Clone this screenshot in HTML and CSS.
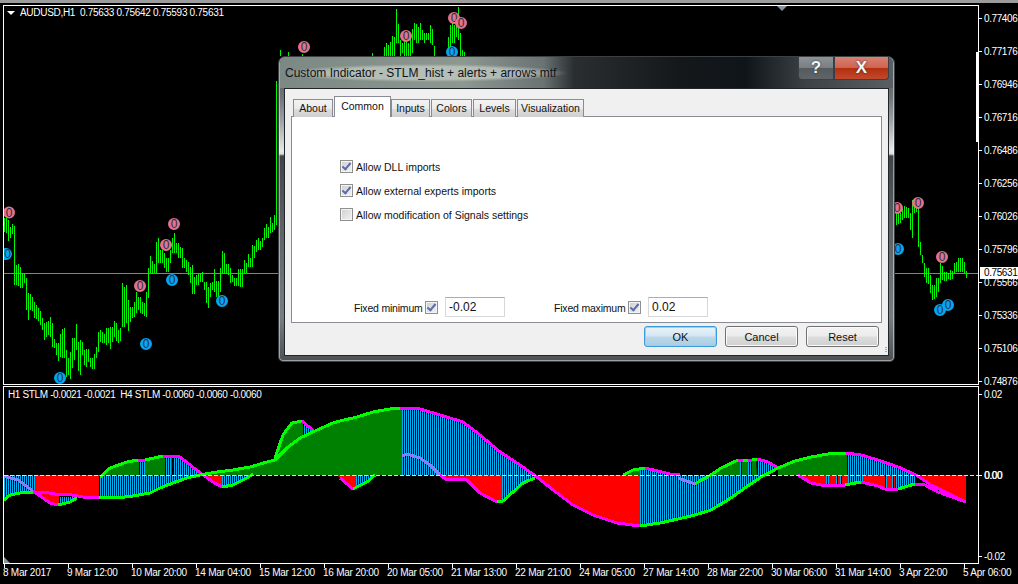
FILE: index.html
```html
<!DOCTYPE html>
<html lang="en">
<head>
    <meta charset="UTF-8">
    <title>AUDUSD,H1 - Custom Indicator</title>
    <link rel="stylesheet" href="styles.css">
</head>
<body>

    <div class="top-edge"></div>

    <!-- Price chart -->
    <section class="chart-row price-row">
        <div class="plot price-plot">
            <div class="chart-title"><span class="title-arrow"></span>AUDUSD,H1&nbsp; 0.75633 0.75642 0.75593 0.75631</div>
            <span class="shift-mark"></span>
            <span class="period-mark"></span>
            <svg width="974" height="378" viewBox="4 6 974 378">
                <line class="bid-line" x1="4" y1="273.5" x2="978" y2="273.5"/>
                <path class="bars" d="M4.5 218V232M6.5 218V233M8.5 220V241M10.5 227V238M12.5 224V234M14.5 226V285M16.5 265V285M18.5 264V286M20.5 267V288M22.5 273V288M24.5 273V283M26.5 278V310M28.5 293V320M30.5 294V310M32.5 297V311M34.5 302V318M36.5 305V319M38.5 308V321M40.5 311V325M42.5 318V330M44.5 323V340M46.5 322V337M48.5 321V335M50.5 317V337M52.5 323V347M54.5 339V348M56.5 343V355M58.5 343V361M60.5 334V357M62.5 329V358M64.5 328V358M66.5 350V377M68.5 358V375M70.5 352V379M72.5 338V368M74.5 338V360M76.5 324V350M78.5 342V371M80.5 340V375M82.5 342V355M84.5 350V365M86.5 349V367M88.5 349V362M90.5 358V367M92.5 358V369M94.5 354V369M96.5 347V358M98.5 332V352M100.5 330V342M102.5 332V343M104.5 334V343M106.5 328V345M108.5 328V343M110.5 327V349M112.5 327V342M114.5 321V337M116.5 323V341M118.5 330V343M120.5 328V341M122.5 283V327M124.5 287V327M126.5 285V323M128.5 300V331M130.5 307V322M132.5 307V318M134.5 302V317M136.5 292V313M138.5 297V310M140.5 297V313M142.5 302V314M144.5 303V316M146.5 292V317M148.5 268V298M150.5 256V273M152.5 261V274M154.5 264V273M156.5 242V273M158.5 238V263M160.5 250V263M162.5 250V263M164.5 253V268M166.5 258V272M168.5 258V272M170.5 250V263M172.5 238V253M174.5 233V253M176.5 243V253M178.5 243V258M180.5 247V258M182.5 248V268M184.5 258V268M186.5 260V272M188.5 262V275M190.5 267V283M192.5 265V294M194.5 277V294M196.5 275V285M198.5 274V285M200.5 273V282M202.5 272V282M204.5 282V290M206.5 282V303M208.5 287V308M210.5 283V297M212.5 282V290M214.5 269V292M216.5 281V297M218.5 281V297M220.5 268V292M222.5 251V274M224.5 253V274M226.5 264V274M228.5 264V275M230.5 268V283M232.5 275V282M234.5 278V286M236.5 278V286M238.5 269V286M240.5 269V287M242.5 269V287M244.5 260V273M246.5 263V273M248.5 254V267M250.5 258V267M252.5 245V267M254.5 246V258M256.5 240V252M258.5 238V250M260.5 241V250M262.5 238V247M264.5 228V240M266.5 224V238M268.5 227V238M270.5 217V233M272.5 223V232M274.5 215V230M276.5 81V225M280.5 50V56M288.5 52V56M302.5 54V56"/>
                <path class="bars" d="M372.5 53V56M384.5 47V56M386.5 43V56M388.5 45V56M390.5 42V56M392.5 36V56M394.5 37V56M396.5 9V43M398.5 24V43M400.5 40V56M402.5 43V53M404.5 38V56M406.5 42V56M408.5 43V56M410.5 38V56M412.5 29V53M414.5 23V40M416.5 24V43M418.5 27V43M420.5 23V40M422.5 30V40M424.5 33V43M426.5 33V40M428.5 33V40M430.5 25V43M432.5 29V45M434.5 46V56M448.5 37V50M450.5 25V56M452.5 17V43M454.5 25V43M456.5 20V37M458.5 7V40M460.5 33V56M462.5 50V56M464.5 52V56"/>
                <path class="bars" d="M896.5 208V225M898.5 208V224M900.5 213V223M902.5 208V220M904.5 206V218M906.5 207V218M908.5 208V218M910.5 213V230M912.5 200V238M914.5 199V213M916.5 202V212M918.5 202V247M920.5 242V255M922.5 255V263M924.5 263V277M926.5 268V283M928.5 268V284M930.5 275V293M932.5 285V300M934.5 285V299M936.5 278V297M938.5 278V292M940.5 263V283M942.5 266V280M944.5 272V281M946.5 272V281M948.5 273V279M950.5 270V280M952.5 271V279M954.5 263V273M956.5 262V272M958.5 258V272M960.5 258V272M962.5 258V272M964.5 262V273M966.5 271V278"/>

                <g class="marks sell">
                    <circle cx="9" cy="212.5" r="5"/><text x="9" y="216.5">0</text>
                    <circle cx="174" cy="224" r="5"/><text x="174" y="228">0</text>
                    <circle cx="166" cy="245" r="5"/><text x="166" y="249">0</text>
                    <circle cx="140" cy="286" r="5"/><text x="140" y="290">0</text>
                    <circle cx="304" cy="47" r="5"/><text x="304" y="51">0</text>
                    <circle cx="406" cy="36" r="5"/><text x="406" y="40">0</text>
                    <circle cx="454" cy="18" r="5"/><text x="454" y="22">0</text>
                    <circle cx="461" cy="23" r="5"/><text x="461" y="27">0</text>
                    <circle cx="897" cy="208" r="5"/><text x="897" y="212">0</text>
                    <circle cx="918" cy="203" r="5"/><text x="918" y="207">0</text>
                    <circle cx="942" cy="257" r="5"/><text x="942" y="261">0</text>
                </g>
                <g class="marks buy">
                    <circle cx="6" cy="254" r="5"/><text x="7.5" y="258">0</text>
                    <circle cx="172" cy="280" r="5"/><text x="172" y="284">0</text>
                    <circle cx="222" cy="301" r="5"/><text x="222" y="305">0</text>
                    <circle cx="146" cy="344" r="5"/><text x="146" y="348">0</text>
                    <circle cx="60" cy="378" r="5"/><text x="60" y="382">0</text>
                    <circle cx="452" cy="52" r="5"/><text x="452" y="56">0</text>
                    <circle cx="898" cy="249" r="5"/><text x="898" y="253">0</text>
                    <circle cx="940" cy="310" r="5"/><text x="940" y="314">0</text>
                    <circle cx="948" cy="305" r="5"/><text x="948" y="309">0</text>
                </g>
            </svg>
        </div>
        <div class="price-axis">
            <div class="axis-label">0.77406</div>
            <div class="axis-label">0.77176</div>
            <div class="axis-label">0.76946</div>
            <div class="axis-label">0.76716</div>
            <div class="axis-label">0.76486</div>
            <div class="axis-label">0.76256</div>
            <div class="axis-label">0.76026</div>
            <div class="axis-label">0.75796</div>
            <div class="axis-label">0.75566</div>
            <div class="axis-label">0.75336</div>
            <div class="axis-label">0.75106</div>
            <div class="axis-label">0.74876</div>
        </div>
        <div class="bid-tag">0.75631</div>
    </section>

    <!-- STLM indicator window -->
    <section class="chart-row stlm-row">
        <div class="plot stlm-plot">
            <div class="chart-title stlm-title">H1 STLM -0.0021 -0.0021&nbsp; H4 STLM -0.0060 -0.0060 -0.0060</div>
            <span class="corner-mark"></span>
            <svg width="974" height="176" viewBox="4 387 974 176">
                <defs>
                    <pattern id="stripes" width="2" height="4" patternUnits="userSpaceOnUse">
                        <rect width="2" height="4" fill="#000"/>
                        <rect width="1" height="4" fill="#00aef0"/>
                    </pattern>
                </defs>

                <g class="red">
                    <polygon points="35,475 99,475 99,497 83,497 67,494 55,494 43,492 35,492"/>
                    <polygon points="35,492 43,498 50,503 59,505 59,494 43,492"/>
                    <polygon points="203,475 222,475 222,487 213,482"/>
                    <polygon points="337,475 356,475 356,489 353,489 340,478"/>
                    <polygon points="440,475 502,475 502,501 497,502 480,493 467,480 457,479 447,480"/>
                    <polygon points="537,475 640,475 640,526 617,523 593,515 573,505 553,490"/>
                    <polygon points="798,475 848,475 848,485 821,485 811,483"/>
                    <polygon points="863,475 895,475 895,488 885,489 870,483 863,481"/>
                    <polygon points="916,475 966,475 966,502 948,493 931,485"/>
                </g>
                <g class="green">
                    <polygon points="100,475 100,477 110,468 127,462 138,460 163,456 172,456 172,475"/>
                    <polygon points="200,475 217,472 233,470 250,467 267,462 275,458 283,435 292,423 302,421 315,432 317,430 333,423 340,421 357,417 373,412 390,409 402,408 402,475"/>
                    <polygon points="623,475 633,470 645,468 640,468 640,475"/>
                    <polygon points="711,475 721,468 738,460 756,459 757,475"/>
                    <polygon points="778,475 778,468 795,461 811,457 828,454 847,453 847,475"/>
                </g>
                <g class="blue">
                    <polygon points="4,475 35,475 35,492 20,493 10,495 4,500"/>
                    <polygon points="60,497 77,497 72,502 60,504"/>
                    <polygon points="100,475 200,475 187,478 173,483 160,488 150,493 133,496 117,498 100,497"/>
                    <polygon points="139,460 145,460 145,475 139,475"/>
                    <polygon points="165,456 171,456 171,475 165,475"/>
                    <polygon points="173,456 180,457 190,465 200,475 173,475"/>
                    <polygon points="222,475 253,475 247,478 233,485 222,487"/>
                    <polygon points="303,421 315,432 303,438"/>
                    <polygon points="356,475 375,475 367,482 356,489"/>
                    <polygon points="402,475 402,408 420,409 430,412 450,418 463,422 480,435 500,452 517,463 537,477 535,475"/>
                    <polygon points="502,475 535,475 523,483 513,492 502,501"/>
                    <polygon points="640,468 645,468 670,474 680,475 761,475 761,477 745,488 728,500 711,510 695,515 678,519 660,523 640,526"/>
                    <polygon points="740,460 742,460 742,475 740,475"/>
                    <polygon points="748,460 752,460 752,475 748,475"/>
                    <polygon points="758,459 768,462 778,468 761,475 758,475"/>
                    <polygon points="848,453 861,455 878,460 898,467 916,475 848,475"/>
                    <polygon points="826,475 829,475 829,485 826,485"/>
                    <polygon points="836,475 838,475 838,485 836,485"/>
                    <polygon points="840,475 842,475 842,485 840,485"/>
                    <polygon points="848,475 863,475 863,481 848,485"/>
                    <polygon points="885,475 887,475 887,489 885,489"/>
                    <polygon points="892,475 894,475 894,489 892,489"/>
                    <polygon points="896,475 916,475 915,484 900,488 896,488"/>
                </g>

                <!-- magenta seen through the stripes -->
                <polyline class="line lilac" points="4,476 18,480 33,491"/>
                <polyline class="line lilac" points="402,456 407,454 420,458 430,465 440,475"/>
                <polyline class="line lilac" points="678,478 695,484"/>

                <!-- fast line -->
                <polyline class="line pink" points="33,491 43,498 50,503 58,505"/>
                <polyline class="line lime" points="58,505 70,502 77,498"/>
                <polyline class="line lime" points="100,477 110,468 127,462 138,460"/>
                <polyline class="line pink" points="138,460 145,460"/>
                <polyline class="line lime" points="145,460 163,456"/>
                <polyline class="line pink" points="163,456 180,457 190,465 202,474 213,482 222,487"/>
                <polyline class="line lime" points="222,487 233,485 247,478 253,474"/>
                <polyline class="line lime" points="275,458 283,435 292,423 302,421"/>
                <polyline class="line pink" points="302,421 315,432"/>
                <polyline class="line pink" points="340,478 353,489"/>
                <polyline class="line lime" points="353,489 367,482 375,475"/>
                <polyline class="line pink" points="440,475 447,480 457,479 467,480 480,493 497,502"/>
                <polyline class="line lime" points="497,502 503,501 513,492 523,483 535,478"/>
                <polyline class="line lime" points="623,475 633,470 645,468"/>
                <polyline class="line pink" points="645,468 670,474 680,475"/>
                <polyline class="line lime" points="695,484 698,482 711,475 721,468 738,460"/>
                <polyline class="line pink" points="738,460 743,460"/>
                <polyline class="line lime" points="743,460 748,460"/>
                <polyline class="line pink" points="748,460 752,460"/>
                <polyline class="line lime" points="752,460 757,459"/>
                <polyline class="line pink" points="757,459 768,462 778,468"/>
                <polyline class="line pink" points="798,475 811,483 821,485 845,485"/>
                <polyline class="line lime" points="845,485 861,482"/>
                <polyline class="line pink" points="861,482 878,486 885,489 898,489"/>
                <polyline class="line lime" points="898,489 915,484"/>
                <polyline class="line pink" points="915,484 925,485 938,492 966,502"/>

                <!-- slow line -->
                <polyline class="line lime" points="4,500 10,495 20,493 33,492"/>
                <polyline class="line pink" points="33,492 43,492 55,494 67,494 83,497 99,497"/>
                <polyline class="line lime" points="99,497 117,498 133,496 150,493 160,488 173,483 187,478 200,475 217,472 233,470 250,467 267,462 275,460 287,448 300,438 317,430 333,423 340,421 357,417 373,412 390,409 400,408"/>
                <polyline class="line pink" points="400,408 420,409 430,412 450,418 463,422 480,435 500,452 517,463 537,477 553,490 573,505 593,515 617,523 640,526"/>
                <polyline class="line lime" points="640,526 660,523 678,519 695,515 711,510 728,500 745,488 761,477 778,468 795,461 811,457 828,454 846,453"/>
                <polyline class="line pink" points="846,453 861,455 878,460 898,467 916,475 931,485 948,493 966,502"/>

                <line class="zero-line" x1="4" y1="475.5" x2="978" y2="475.5"/>
            </svg>
        </div>
        <div class="scale-axis">
            <div class="axis-label">0.02</div>
            <div class="axis-label zero-label">0.00</div>
            <div class="axis-label">-0.02</div>
        </div>
    </section>

    <div class="time-axis">
        <span class="time-label">8 Mar 2017</span>
        <span class="time-label">9 Mar 12:00</span>
        <span class="time-label">10 Mar 20:00</span>
        <span class="time-label">14 Mar 04:00</span>
        <span class="time-label">15 Mar 12:00</span>
        <span class="time-label">16 Mar 20:00</span>
        <span class="time-label">20 Mar 05:00</span>
        <span class="time-label">21 Mar 13:00</span>
        <span class="time-label">22 Mar 21:00</span>
        <span class="time-label">24 Mar 05:00</span>
        <span class="time-label">27 Mar 14:00</span>
        <span class="time-label">28 Mar 22:00</span>
        <span class="time-label">30 Mar 06:00</span>
        <span class="time-label">31 Mar 14:00</span>
        <span class="time-label">3 Apr 22:00</span>
        <span class="time-label">5 Apr 06:00</span>
    </div>

    <!-- Custom Indicator dialog -->
    <div class="dialog">
        <div class="title-bar">
            <div class="title-text">Custom Indicator - STLM_hist + alerts + arrows mtf</div>
            <div class="window-buttons">
                <span class="win-btn help-btn">?</span>
                <span class="win-btn close-btn">X</span>
            </div>
        </div>
        <div class="client">
            <div class="tabs">
                <div class="tab tab-about">About</div>
                <div class="tab tab-common active">Common</div>
                <div class="tab tab-inputs">Inputs</div>
                <div class="tab tab-colors">Colors</div>
                <div class="tab tab-levels">Levels</div>
                <div class="tab tab-visual">Visualization</div>
            </div>
            <div class="tab-panel">
                <div class="options">
                    <label class="option"><span class="check checked"></span>Allow DLL imports</label>
                    <label class="option"><span class="check checked"></span>Allow external experts imports</label>
                    <label class="option"><span class="check"></span>Allow modification of Signals settings</label>
                </div>
                <div class="range-row">
                    <div class="range">
                        <span class="range-name">Fixed minimum</span>
                        <span class="check checked"></span>
                        <span class="text-box">-0.02</span>
                    </div>
                    <div class="range">
                        <span class="range-name range-max">Fixed maximum</span>
                        <span class="check checked"></span>
                        <span class="text-box">0.02</span>
                    </div>
                </div>
            </div>
            <div class="buttons">
                <button class="btn default-btn">OK</button>
                <button class="btn">Cancel</button>
                <button class="btn">Reset</button>
            </div>
            <span class="grip"></span>
        </div>
    </div>

</body>
</html>
```

FILE: styles.css
```css
body {
    margin: 0;
    width: 1018px;
    height: 584px;
    overflow: hidden;
    position: relative;
    background-color: #000;
    color: #fff;
    font-family: "Liberation Sans", Arial, sans-serif;
    font-size: 10px;
}

.top-edge {
    height: 2px;
    border-top: 3px solid #9c9c9c;
}

.chart-row {
    display: flex;
    align-items: flex-start;
}

.price-row {
    height: 380px;
}

.stlm-row {
    height: 178px;
    margin-top: 1px;
}

.plot {
    position: relative;
    flex: none;
    width: 974px;
    margin-left: 3px;
    border: 1px solid #fff;
    overflow: hidden;
}

.plot svg {
    display: block;
}

.chart-title {
    position: absolute;
    left: 16px;
    top: 1px;
    white-space: nowrap;
    line-height: 12px;
    letter-spacing: -0.3px;
}

.title-arrow {
    position: absolute;
    left: -13px;
    top: 4px;
    border-left: 4px solid transparent;
    border-right: 4px solid transparent;
    border-top: 4px solid #fff;
}

.stlm-title {
    left: 4px;
    top: 2px;
    letter-spacing: -0.36px;
}

.shift-mark {
    position: absolute;
    right: 0;
    top: 46px;
    width: 2px;
    height: 90px;
    background-color: #fff;
}

.period-mark {
    position: absolute;
    left: 773px;
    top: 0;
    border-left: 5px solid transparent;
    border-right: 5px solid transparent;
    border-top: 5px solid #8a929c;
}

.corner-mark {
    position: absolute;
    left: 0;
    bottom: 0;
    border-left: 6px solid #8a929c;
    border-top: 6px solid transparent;
}

/* Chart contents */
.bid-line {
    stroke: #7c848c;
}

.bars {
    fill: none;
    stroke: #00f800;
    stroke-width: 1;
}

.marks text {
    font-size: 12px;
    text-anchor: middle;
    fill: #26303c;
}

.sell circle {
    fill: #e5718d;
    stroke: #e5718d;
    stroke-width: 2;
}

.buy circle {
    fill: #00a8f0;
    stroke: #00a8f0;
    stroke-width: 2;
}

.red polygon { fill: #ff0000; }
.green polygon { fill: #008000; }
.blue polygon { fill: url(#stripes); }

.line {
    fill: none;
    stroke-width: 3;
    shape-rendering: crispEdges;
}

.lime { stroke: #00ff00; }
.pink { stroke: #ff00ff; }
.lilac { stroke: #8f7cf5; }

.zero-line {
    stroke: #ffff00;
    stroke-dasharray: 4 2;
}

/* Axes */
.price-axis,
.scale-axis {
    display: flex;
    flex-direction: column;
    flex: none;
}

.price-axis {
    margin-top: -3px;
}

.axis-label {
    display: flex;
    align-items: center;
    gap: 2px;
    height: 33px;
    letter-spacing: -0.4px;
}

.axis-label::before {
    content: "";
    width: 3px;
    height: 1px;
    background-color: #fff;
}

.scale-axis {
    height: 176px;
    justify-content: space-between;
    margin-top: 1px;
}

.scale-axis .axis-label {
    height: 14px;
}

.zero-label {
    text-shadow: 0.5px 0 0 #fff;
}

.bid-tag {
    position: absolute;
    left: 980px;
    top: 267px;
    width: 38px;
    height: 12px;
    line-height: 12px;
    padding-left: 4px;
    box-sizing: border-box;
    background-color: #fff;
    color: #000;
    letter-spacing: -0.4px;
}

.time-axis {
    display: flex;
    margin-left: 3px;
    width: 1015px;
}

.time-label {
    flex: none;
    width: 64px;
    height: 20px;
    line-height: 17px;
    box-sizing: border-box;
    position: relative;
    white-space: nowrap;
    letter-spacing: -0.25px;
}

.time-label::before {
    content: "";
    position: absolute;
    left: 1px;
    top: 0;
    width: 1px;
    height: 4px;
    background-color: #fff;
}

/* Dialog */
.dialog {
    position: absolute;
    left: 278px;
    top: 56px;
    width: 617px;
    height: 306px;
    box-sizing: border-box;
    padding: 0 5px 5px 5px;
    border-radius: 7px 7px 5px 5px;
    border: 1px solid #3c4042;
    box-shadow: inset 0 0 0 1px rgba(255, 255, 255, 0.45);
    background: linear-gradient(180deg, #4c5355 0, #6f7577 40px, #9a9ea0 62px, #e8e8e8 94px, #dcdcdc 97px, #3f4446 99px, #5d6163 170px, #7a7d80 260px, #4c4f52 306px);
    display: flex;
    flex-direction: column;
    color: #111;
    font-size: 10.5px;
}

.title-bar {
    display: flex;
    justify-content: space-between;
    align-items: flex-start;
    height: 31px;
    margin: 0 -4px 0 -4px;
    padding: 0 4px 0 5px;
    border-radius: 6px 6px 0 0;
    background: linear-gradient(90deg, #7c8883 0, #8d9891 30%, #6a7272 43%, #2a2e30 48%, #14181b 65%, #10151a 76%, #3d4246 86%, #5a5f63 100%);
}

.title-text {
    margin-top: 7px;
    padding: 2px 12px 2px 0;
    font-size: 12px;
    line-height: 14px;
    color: #0e1318;
    white-space: nowrap;
    background: radial-gradient(closest-side, rgba(200, 208, 200, 0.7) 70%, rgba(200, 208, 200, 0));
}

.window-buttons {
    display: flex;
    height: 23px;
}

.win-btn {
    display: flex;
    align-items: center;
    justify-content: center;
    font-weight: bold;
    font-size: 17px;
    color: #f4f4f4;
    text-shadow: 0 0 2px #222;
    border: 1px solid #3a3f44;
    border-top: none;
    box-sizing: border-box;
}

.help-btn {
    width: 36px;
    border-radius: 0 0 0 4px;
    background: linear-gradient(180deg, #8d9295 0, #7a7f84 48%, #565b60 52%, #5f6469 100%);
}

.close-btn {
    width: 55px;
    border-radius: 0 0 4px 0;
    background: linear-gradient(180deg, #d98172 0, #cf6352 48%, #b3300f 52%, #c2482c 100%);
}

.client {
    position: relative;
    flex: 1;
    box-sizing: border-box;
    padding: 8px 7px 0 6px;
    background-color: #f0f0f0;
    border: 1px solid #20262a;
    display: flex;
    flex-direction: column;
}

.tabs {
    display: flex;
    align-items: flex-end;
    padding-left: 2px;
    height: 20px;
    margin-bottom: -1px;
}

.tab {
    position: relative;
    flex: none;
    box-sizing: border-box;
    height: 18px;
    line-height: 17px;
    text-align: center;
    margin-right: 1px;
    border: 1px solid #898c95;
    border-bottom: none;
    background: linear-gradient(180deg, #f3f3f3 0, #ebebeb 50%, #dddddd 52%, #cfcfcf 100%);
}

.tab.active {
    z-index: 1;
    height: 21px;
    margin-right: 0;
    line-height: 19px;
    background: #fff;
}

.tab-about { width: 40px; }
.tab-common { width: 57px; }
.tab-inputs { width: 39px; }
.tab-colors { width: 41px; }
.tab-levels { width: 43px; }
.tab-visual { width: 67px; }

.tab-panel {
    flex: none;
    width: 591px;
    height: 207px;
    box-sizing: border-box;
    background-color: #fff;
    border: 1px solid #898c95;
    display: flex;
    flex-direction: column;
    justify-content: space-between;
    padding: 43px 0 5px 0;
}

.options {
    display: flex;
    flex-direction: column;
    gap: 11px;
    padding-left: 48px;
}

.option {
    display: flex;
    align-items: center;
    gap: 3px;
    height: 13px;
}

.check {
    position: relative;
    flex: none;
    width: 13px;
    height: 13px;
    box-sizing: border-box;
    border: 1px solid #8e8f8f;
    box-shadow: inset 0 0 0 1px #f4f4f4;
    background: linear-gradient(135deg, #cfcfcf, #f2f2f2);
}

.check.checked::after {
    content: "";
    position: absolute;
    left: 3px;
    top: 0;
    width: 3px;
    height: 7px;
    border-right: 2px solid #5a6cab;
    border-bottom: 2px solid #5a6cab;
    transform: rotate(40deg);
}

.range-row {
    display: flex;
    gap: 49px;
    padding-left: 62px;
}

.range {
    display: flex;
    align-items: center;
}

.range-name {
    width: 68px;
    margin-right: 3px;
    padding-top: 1px;
    white-space: nowrap;
    letter-spacing: -0.2px;
}

.range-max {
    width: 71px;
}

.range .check {
    margin-right: 7px;
}

.text-box {
    box-sizing: border-box;
    width: 60px;
    height: 20px;
    line-height: 18px;
    padding-left: 3px;
    font-size: 12px;
    border: 1px solid #d6d8dc;
    border-top-color: #abadb3;
    background-color: #fff;
}

.buttons {
    display: flex;
    justify-content: flex-end;
    gap: 8px;
    margin-top: 3px;
    padding-right: 2px;
}

.btn {
    width: 73px;
    height: 21px;
    padding: 0;
    font-family: inherit;
    font-size: 11px;
    color: #111;
    border: 1px solid #707070;
    border-radius: 3px;
    background: linear-gradient(180deg, #f3f3f3 0, #ebebeb 48%, #dddddd 52%, #cfcfcf 100%);
    box-shadow: inset 0 0 0 1px #fbfbfb;
}

.default-btn {
    border-color: #3c9ad6;
    background: linear-gradient(180deg, #e9f3fa 0, #d5e6f3 48%, #bcd7e9 52%, #a9cde4 100%);
    box-shadow: inset 0 0 0 1px #8fd3f5;
}

.grip {
    position: absolute;
    right: 1px;
    bottom: 2px;
    width: 2px;
    height: 6px;
    background: repeating-linear-gradient(180deg, #a9a9a9 0 1px, transparent 1px 2px);
}
```
